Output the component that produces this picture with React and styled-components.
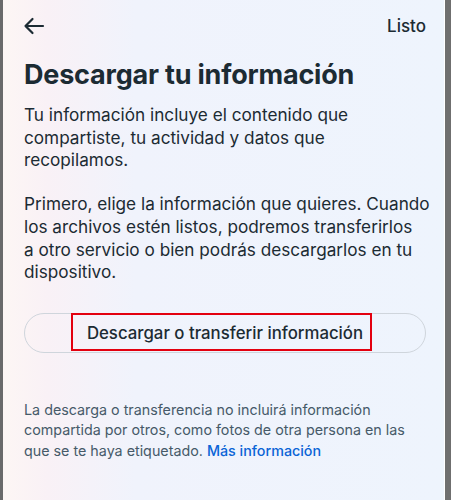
import styled, { createGlobalStyle } from "styled-components";

const GlobalStyle = createGlobalStyle`
  html, body {
    margin: 0;
    padding: 0;
  }
  body {
    font-family: Inter, "Noto Sans", sans-serif;
    color: #1c2b33;
  }
`;

export default function App() {
  return (
    <>
      <GlobalStyle />
      <Frame>
        <Screen>
          <TopBar>
            <BackButton aria-label="Atrás">
              <svg width="22" height="18" viewBox="0 0 22 18" fill="none">
                <path
                  d="M20 9H2.5M9.5 2L2.5 9l7 7"
                  stroke="#1c2b33"
                  strokeWidth="2.2"
                  strokeLinecap="round"
                  strokeLinejoin="round"
                />
              </svg>
            </BackButton>
            <DoneText>Listo</DoneText>
          </TopBar>

          <Title>Descargar tu información</Title>

          <Paragraph>
            Tu información incluye el contenido que
            <br />
            compartiste, tu actividad y datos que
            <br />
            recopilamos.
          </Paragraph>
          <Paragraph>
            Primero, elige la información que quieres. Cuando
            <br />
            los archivos estén listos, podremos transferirlos
            <br />
            a otro servicio o bien podrás descargarlos en tu
            <br />
            dispositivo.
          </Paragraph>

          <PillButton>
            Descargar o transferir información
            <Highlight />
          </PillButton>

          <Note>
            La descarga o transferencia no incluirá información compartida por
            otros, como fotos de otra persona en las que se te haya etiquetado.{" "}
            <NoteLink href="#">Más información</NoteLink>
          </Note>
        </Screen>
      </Frame>
    </>
  );
}

const Frame = styled.div`
  display: flex;
  width: 451px;
  height: 500px;
  background: #6f6f6f;
  border-left: 3px solid #6a6a6a;
  border-right: 6px solid #6f6f6f;
  box-sizing: border-box;
`;

const Screen = styled.div`
  flex: 1;
  display: flex;
  flex-direction: column;
  padding: 0 24px 0 21px;
  border-right: 1px solid #ffffff;
  background: linear-gradient(
    90deg,
    #fdf6f4 0%,
    #f9f1f6 10%,
    #f0f3fc 30%,
    #eef4fd 100%
  );
`;

const TopBar = styled.div`
  display: flex;
  justify-content: space-between;
  align-items: center;
  height: 52px;
  margin-right: -6px;
`;

const BackButton = styled.button`
  display: flex;
  align-items: center;
  padding: 0;
  margin-left: -1px;
  border: none;
  background: none;
`;

const DoneText = styled.span`
  font-size: 17px;
  font-weight: 500;
  color: #1c2b33;
`;

const Title = styled.h1`
  margin: 6px 0 12px;
  font-size: 27px;
  line-height: 34px;
  font-weight: 700;
  letter-spacing: -0.2px;
`;

const Paragraph = styled.p`
  margin: 0 0 21px;
  margin-right: -12px;
  font-size: 17.2px;
  line-height: 22.7px;
  font-weight: 400;
  white-space: nowrap;
`;

const PillButton = styled.button`
  position: relative;
  display: flex;
  align-items: center;
  justify-content: center;
  height: 40px;
  margin: 8px -6px 0 0;
  border: 1px solid #cfd5dc;
  border-radius: 20px;
  background: transparent;
  font-family: inherit;
  font-size: 16.8px;
  font-weight: 500;
  color: #1c2b33;
`;

const Highlight = styled.span`
  position: absolute;
  left: 46px;
  top: -1px;
  width: 301px;
  height: 38px;
  border: 2px solid #e3000f;
  box-sizing: border-box;
  pointer-events: none;
`;

const Note = styled.p`
  margin: 47px 0 0;
  font-size: 14.3px;
  line-height: 20.5px;
  color: #465a69;
`;

const NoteLink = styled.a`
  color: #0a64d6;
  font-weight: 500;
  text-decoration: none;
`;
